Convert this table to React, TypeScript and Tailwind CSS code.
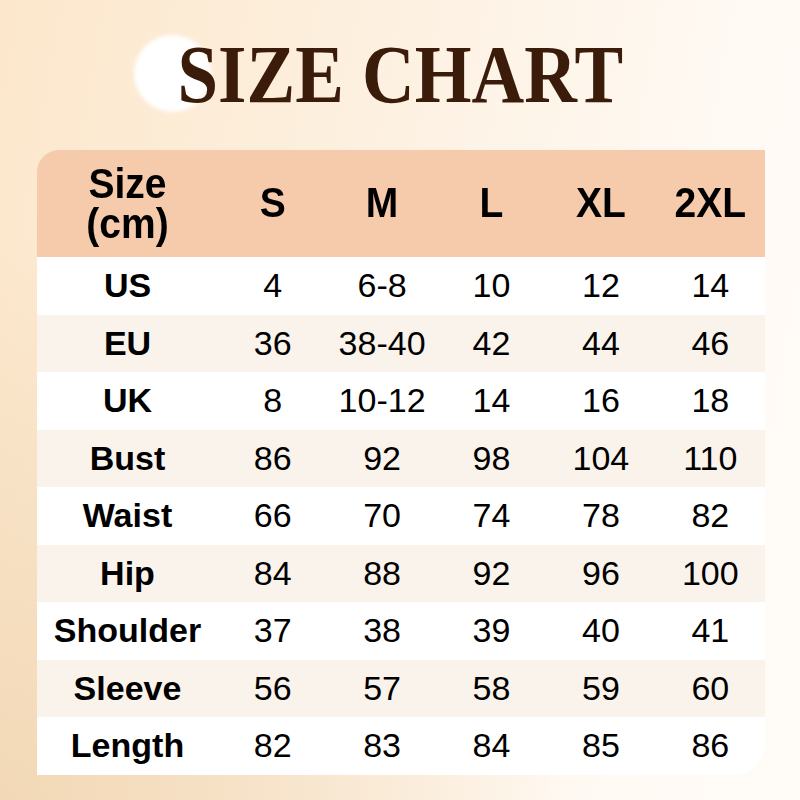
import React from "react";

const rows: [string, string[]][] = [
  ["US", ["4", "6-8", "10", "12", "14"]],
  ["EU", ["36", "38-40", "42", "44", "46"]],
  ["UK", ["8", "10-12", "14", "16", "18"]],
  ["Bust", ["86", "92", "98", "104", "110"]],
  ["Waist", ["66", "70", "74", "78", "82"]],
  ["Hip", ["84", "88", "92", "96", "100"]],
  ["Shoulder", ["37", "38", "39", "40", "41"]],
  ["Sleeve", ["56", "57", "58", "59", "60"]],
  ["Length", ["82", "83", "84", "85", "86"]],
];

const sizes = ["S", "M", "L", "XL", "2XL"];

export default function App() {
  return (
    <div
      className="relative w-[800px] h-[800px] overflow-hidden bg-[radial-gradient(circle_at_0%_100%,#f2d8b6_0%,rgba(242,216,182,0)_50%),linear-gradient(100deg,#fce7cb_0%,#fdf1e2_45%,#fffaf4_80%,#fffbf7_100%)]"
      style={{ fontFamily: '"Liberation Sans", Arial, sans-serif' }}
    >
      <div className="absolute left-[134px] top-[35px] w-[77px] h-[77px] rounded-full bg-white blur-[2px]" />
      <div className="relative h-[150px] pt-[34px] flex justify-center">
        <h1
          className="text-[82px] leading-none font-bold text-[#3b1c0a] scale-x-[0.89] whitespace-nowrap"
          style={{ fontFamily: '"Liberation Serif", "Times New Roman", serif' }}
        >
          SIZE CHART
        </h1>
      </div>
      <div className="relative ml-[37px] w-[728px] rounded-tl-[22px] rounded-br-[32px] overflow-hidden text-black">
        <div className="grid grid-cols-[181px_repeat(5,1fr)] h-[107px] bg-[#f6cbac] font-bold text-[39px]">
          <div className="flex flex-col items-center justify-center gap-[4px]">
            <span className="block leading-[36px] scale-y-110">Size</span>
            <span className="block leading-[36px] scale-y-110">(cm)</span>
          </div>
          {sizes.map((s) => (
            <div key={s} className="flex items-center justify-center">
              <span className="inline-block scale-y-110">{s}</span>
            </div>
          ))}
        </div>
        {rows.map(([label, vals], i) => (
          <div
            key={label}
            className={
              "grid grid-cols-[181px_repeat(5,1fr)] h-[57.5px] text-[34px] " +
              (i % 2 === 1 ? "bg-[#faf3eb]" : "bg-white")
            }
          >
            <div className="flex items-center justify-center font-bold">
              <span>{label}</span>
            </div>
            {vals.map((v, j) => (
              <div key={j} className="flex items-center justify-center">
                <span>{v}</span>
              </div>
            ))}
          </div>
        ))}
      </div>
    </div>
  );
}
